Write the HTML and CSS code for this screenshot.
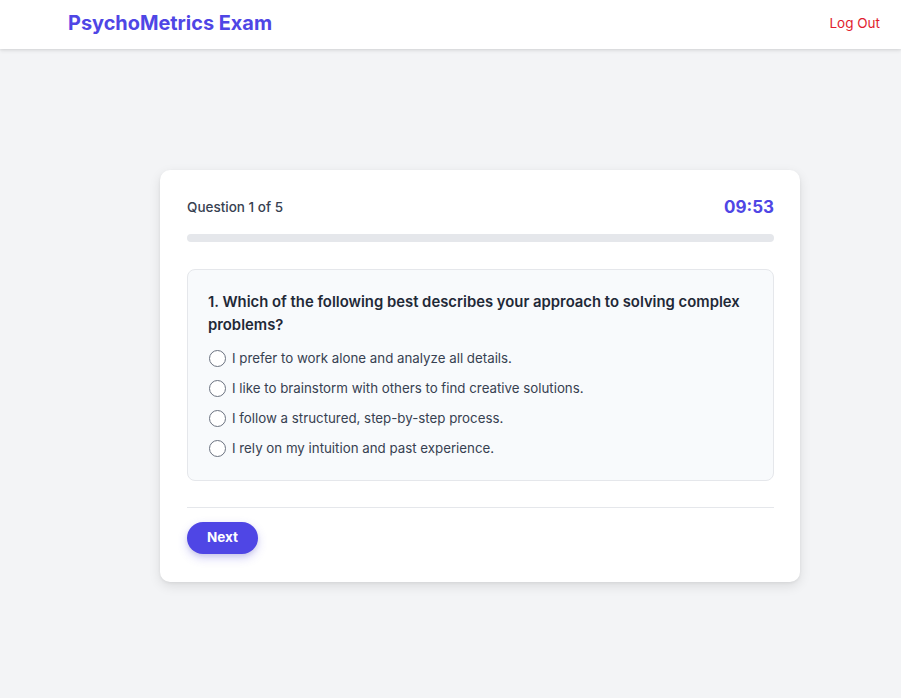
FILE: index.html
```html
<!DOCTYPE html>
<html lang="en">
<head>
<meta charset="utf-8">
<title>PsychoMetrics Exam</title>
<link rel="stylesheet" href="styles.css">
</head>
<body>
<header class="topbar">
  <div class="brand">PsychoMetrics Exam</div>
  <a class="logout" href="#">Log Out</a>
</header>
<main class="main">
  <section class="card">
    <div class="card-head">
      <span class="counter">Question 1 of 5</span>
      <span class="timer">09:53</span>
    </div>
    <div class="progress"><div class="progress-fill" style="width:0%"></div></div>
    <div class="qbox">
      <h2 class="qtext">1. Which of the following best describes your approach to solving complex problems?</h2>
      <ul class="options">
        <li class="option"><span class="radio"></span><span>I prefer to work alone and analyze all details.</span></li>
        <li class="option"><span class="radio"></span><span>I like to brainstorm with others to find creative solutions.</span></li>
        <li class="option"><span class="radio"></span><span>I follow a structured, step-by-step process.</span></li>
        <li class="option"><span class="radio"></span><span>I rely on my intuition and past experience.</span></li>
      </ul>
    </div>
    <div class="divider"></div>
    <button class="next">Next</button>
  </section>
</main>
</body>
</html>
```
FILE: styles.css
```css
* { box-sizing: border-box; }
html, body { margin: 0; padding: 0; }
body {
  background: #f3f4f6;
  font-family: Inter, "Noto Sans", sans-serif;
  color: #1f2937;
  min-height: 698px;
}
.topbar {
  height: 49px;
  background: #fff;
  box-shadow: 0 2px 4px rgba(0,0,0,0.08), 0 1px 2px rgba(0,0,0,0.06);
  display: flex;
  align-items: center;
  justify-content: space-between;
  padding: 0 21px 4px 68px;
}
.brand {
  font-size: 19.9px;
  line-height: 28px;
  font-weight: 700;
  color: #4f46e5;
}
.logout {
  color: #e11d2e;
  font-size: 13.5px;
  line-height: 20px;
  font-weight: 400;
  text-decoration: none;
}
.main {
  padding: 121px 0 0 160px;
}
.card {
  width: 640px;
  background: #fff;
  border-radius: 10px;
  box-shadow: 0 4px 12px rgba(0,0,0,0.10), 0 1px 3px rgba(0,0,0,0.06);
  padding: 27px 26px 28px 27px;
}
.card-head {
  display: flex;
  justify-content: space-between;
  align-items: center;
  height: 20px;
}
.counter {
  font-size: 13.5px;
  font-weight: 500;
  color: #374151;
}
.timer {
  font-size: 17px;
  font-weight: 700;
  color: #4f46e5;
}
.progress {
  margin-top: 17px;
  height: 8px;
  border-radius: 9999px;
  background: #e5e7eb;
  overflow: hidden;
}
.progress-fill { height: 100%; background: #4f46e5; }
.qbox {
  margin-top: 27px;
  background: #f8fafc;
  border: 1px solid #e5e7eb;
  border-radius: 8px;
  padding: 21px 20px 17px 20px;
}
.qtext {
  margin: 0;
  font-size: 14.85px;
  font-weight: 600;
  line-height: 23px;
  color: #1f2937;
}
.options {
  list-style: none;
  margin: 6px 0 0 0;
  padding: 0;
}
.option {
  display: flex;
  align-items: center;
  gap: 6px;
  height: 30px;
  font-size: 13.3px;
  color: #374151;
}
.radio {
  width: 17px;
  height: 17px;
  border: 1px solid #6b7280;
  border-radius: 50%;
  background: #fff;
  flex: none;
  margin-left: 1px;
}
.divider {
  margin-top: 26px;
  height: 1px;
  background: #e5e7eb;
}
.next {
  margin-top: 14px;
  width: 71px;
  height: 32px;
  padding: 0 0 3px 0;
  border: none;
  border-radius: 9999px;
  background: #4f46e5;
  color: #fff;
  font-family: Inter, "Noto Sans", sans-serif;
  font-size: 13.5px;
  font-weight: 700;
  box-shadow: 0 4px 10px rgba(79,70,229,0.25), 0 2px 4px rgba(0,0,0,0.08);
  cursor: pointer;
}
```
